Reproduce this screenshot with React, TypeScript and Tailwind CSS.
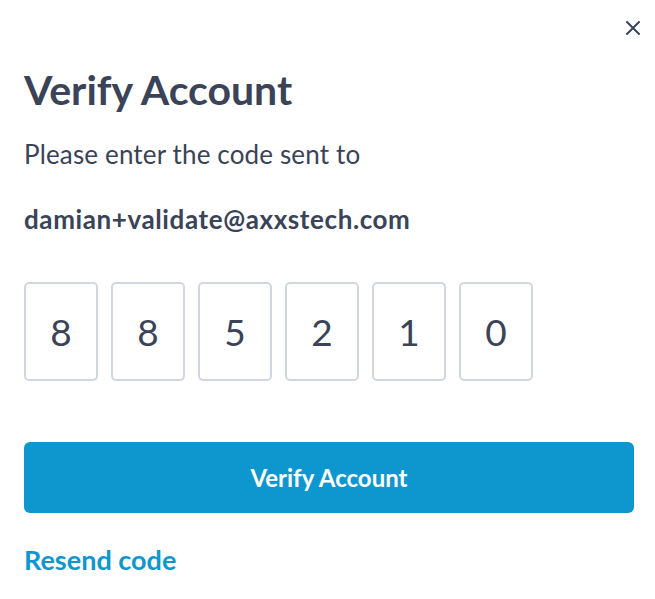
import React from 'react';

const digits = ['8', '8', '5', '2', '1', '0'];

const App: React.FC = () => {
  return (
    <div className="w-[655px] h-[599px] bg-white font-['Lato',sans-serif] text-[#3a4357] relative">
      <button className="absolute top-[17px] right-[11px] w-[22px] h-[22px] flex items-center justify-center text-[#3a4357]">
        <svg width="16" height="16" viewBox="0 0 16 16" fill="none" stroke="currentColor" strokeWidth="2" strokeLinecap="round">
          <path d="M2 2l12 12M14 2L2 14" />
        </svg>
      </button>

      <div className="px-[24px] pt-[66px] flex flex-col">
        <h1 className="text-[41px] font-bold leading-[48px]">Verify Account</h1>
        <p className="mt-[24px] text-[26px] leading-[32px] tracking-[0.15px]">Please enter the code sent to</p>
        <p className="mt-[33px] text-[26px] font-bold leading-[32px] tracking-[0.6px]">damian+validate@axxstech.com</p>

        <div className="mt-[47px] flex gap-[13px]">
          {digits.map((d, i) => (
            <div
              key={i}
              className="w-[74px] h-[99px] rounded-[5px] border-2 border-[#d2d6df] flex items-center justify-center text-[37px]"
            >
              {d}
            </div>
          ))}
        </div>

        <button className="mt-[61px] h-[71px] w-[610px] rounded-[6px] bg-[#0e96ce] text-white text-[24px] font-bold">
          Verify Account
        </button>

        <a className="mt-[31px] text-[27px] font-bold text-[#0e96ce] leading-[32px]">Resend code</a>
      </div>
    </div>
  );
};

export default App;
